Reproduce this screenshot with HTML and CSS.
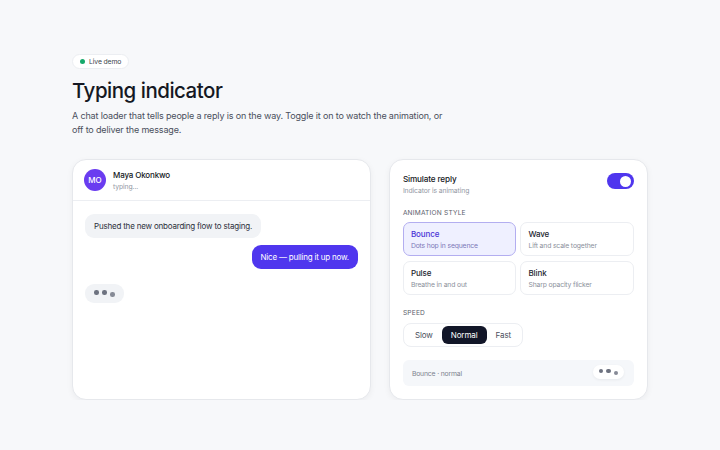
FILE: index.html
```html
<!DOCTYPE html>
<html lang="en">
<head>
  <meta charset="UTF-8" />
  <meta name="viewport" content="width=device-width, initial-scale=1.0" />
  <title>Typing indicator</title>
  <link rel="stylesheet" href="styles.css">
</head>
<body>
  <main class="page">
    <span class="badge"><span class="badge-dot"></span>Live demo</span>
    <h1>Typing indicator</h1>
    <p class="lead">A chat loader that tells people a reply is on the way. Toggle it on to watch the animation, or off to deliver the message.</p>

    <div class="panels">
      <section class="card chat">
        <header class="chat-head">
          <div class="avatar">MO</div>
          <div>
            <div class="name">Maya Okonkwo</div>
            <div class="sub">typing...</div>
          </div>
        </header>
        <div class="chat-body">
          <div class="bubble in">Pushed the new onboarding flow to staging.</div>
          <div class="bubble out">Nice — pulling it up now.</div>
          <div class="typing">
            <span class="dot"></span><span class="dot"></span><span class="dot low"></span>
          </div>
        </div>
      </section>

      <section class="card controls">
        <div class="row">
          <div>
            <div class="label">Simulate reply</div>
            <div class="sub">Indicator is animating</div>
          </div>
          <button class="toggle on" aria-label="Simulate reply"><span class="knob"></span></button>
        </div>

        <div class="section-title">Animation style</div>
        <div class="options">
          <div class="option selected">
            <div class="option-name">Bounce</div>
            <div class="option-desc">Dots hop in sequence</div>
          </div>
          <div class="option">
            <div class="option-name">Wave</div>
            <div class="option-desc">Lift and scale together</div>
          </div>
          <div class="option">
            <div class="option-name">Pulse</div>
            <div class="option-desc">Breathe in and out</div>
          </div>
          <div class="option">
            <div class="option-name">Blink</div>
            <div class="option-desc">Sharp opacity flicker</div>
          </div>
        </div>

        <div class="section-title">Speed</div>
        <div class="segmented">
          <button class="seg">Slow</button>
          <button class="seg active">Normal</button>
          <button class="seg">Fast</button>
        </div>

        <div class="preview">
          <span class="preview-label">Bounce · normal</span>
          <div class="typing mini">
            <span class="dot"></span><span class="dot"></span><span class="dot low"></span>
          </div>
        </div>
      </section>
    </div>
  </main>
</body>
</html>
```

FILE: styles.css
```css
body {
  margin: 0;
  background: #f7f8fa;
  font-family: 'Inter', 'Noto Sans', sans-serif;
  color: #151823;
}
.page {
  width: 576px;
  margin: 0 auto;
  padding-top: 54px;
}
.badge {
  display: flex;
  width: fit-content;
  align-items: center;
  gap: 4px;
  height: 15px;
  padding: 0 7px;
  background: #fff;
  border: 1px solid #eceef2;
  border-radius: 10px;
  font-size: 6.8px;
  letter-spacing: -0.1px;
  color: #3a3f4b;
  box-sizing: border-box;
}
.badge-dot {
  width: 5px;
  height: 5px;
  border-radius: 50%;
  background: #16a96b;
}
h1 {
  margin: 8px 0 0;
  font-size: 20.5px;
  font-weight: 500;
  letter-spacing: -0.5px;
  line-height: 28px;
}
.lead {
  margin: 4px 0 0;
  width: 380px;
  font-size: 9px;
  letter-spacing: -0.15px;
  line-height: 14px;
  color: #4a4f5c;
}
.panels {
  display: flex;
  gap: 18px;
  margin-top: 22px;
}
.card {
  background: #fff;
  border: 1px solid #e6e8ec;
  border-radius: 14px;
  box-shadow: 0 2px 6px rgba(20, 24, 40, 0.05);
  height: 239px;
}
.chat {
  width: 298px;
  display: flex;
  flex-direction: column;
}
.chat-head {
  display: flex;
  align-items: center;
  gap: 7px;
  padding: 9px 11px;
  border-bottom: 1px solid #eceef2;
}
.avatar {
  width: 22px;
  height: 22px;
  border-radius: 50%;
  background: #6a3cf0;
  color: #fff;
  font-size: 8px;
  font-weight: 500;
  display: flex;
  align-items: center;
  justify-content: center;
}
.name {
  font-size: 8px;
  font-weight: 500;
  letter-spacing: -0.15px;
}
.sub {
  font-size: 6.8px;
  letter-spacing: -0.1px;
  color: #9398a4;
  margin-top: 2px;
}
.chat-body {
  display: flex;
  flex-direction: column;
  gap: 7px;
  padding: 13px 12px;
}
.bubble {
  font-size: 8px;
  letter-spacing: -0.2px;
  padding: 7px 9px;
  border-radius: 9px;
  line-height: 10px;
}
.bubble.in {
  align-self: flex-start;
  background: #f1f3f6;
  color: #2c303b;
}
.bubble.out {
  align-self: flex-end;
  background: #4f36ee;
  color: #fff;
}
.typing {
  align-self: flex-start;
  display: flex;
  align-items: center;
  gap: 3.5px;
  margin-top: 8px;
  padding: 7px 9px;
  background: #f1f3f6;
  border-radius: 9px;
}
.dot {
  width: 4.5px;
  height: 4.5px;
  border-radius: 50%;
  background: #6d7280;
  transform: translateY(-1px);
}
.dot.low {
  transform: translateY(1px);
  background: #868a96;
}
.controls {
  width: 232px;
  padding: 14px 13px 0;
  height: 225px;
}
.row {
  display: flex;
  justify-content: space-between;
  align-items: flex-start;
}
.label {
  font-size: 8.2px;
  font-weight: 500;
  letter-spacing: -0.15px;
}
.toggle {
  width: 27px;
  height: 16px;
  margin-top: -1px;
  border: 0;
  border-radius: 8px;
  background: #4f36ee;
  padding: 0;
  display: flex;
  align-items: center;
  justify-content: flex-end;
}
.knob {
  width: 11px;
  height: 11px;
  margin-right: 3px;
  border-radius: 50%;
  background: #fff;
}
.section-title {
  margin: 14px 0 5px;
  font-size: 6.6px;
  color: #5b606c;
  text-transform: uppercase;
  letter-spacing: 0.2px;
}
.options {
  display: grid;
  grid-template-columns: 1fr 1fr;
  gap: 5px 4px;
}
.option {
  border: 1px solid #eceef2;
  border-radius: 7px;
  padding: 6px 7px;
  height: 20px;
}
.option.selected {
  background: #eff0ff;
  border-color: #b3aef0;
}
.option-name {
  font-size: 8px;
  font-weight: 500;
  letter-spacing: -0.1px;
  color: #23262f;
}
.option.selected .option-name {
  color: #4a34d6;
}
.option-desc {
  font-size: 6.8px;
  letter-spacing: -0.15px;
  color: #8b909b;
  margin-top: 2px;
}
.option.selected .option-desc {
  color: #7d78b8;
}
.segmented {
  display: inline-flex;
  padding: 2px;
  border: 1px solid #eceef2;
  border-radius: 8px;
}
.seg {
  border: 0;
  background: none;
  font-family: inherit;
  font-size: 8px;
  letter-spacing: -0.1px;
  color: #4a4f5c;
  padding: 0 9px;
  height: 18px;
  border-radius: 6px;
}
.seg.active {
  background: #121628;
  color: #fff;
}
.preview {
  display: flex;
  justify-content: space-between;
  align-items: center;
  margin-top: 13px;
  height: 26px;
  padding: 0 10px 0 9px;
  background: #f5f7fa;
  border-radius: 6px;
}
.preview-label {
  font-size: 6.8px;
  letter-spacing: -0.15px;
  color: #7d828e;
}
.typing.mini {
  align-self: center;
  margin: -2px 0 0;
  gap: 3px;
  padding: 5px 6px;
  background: #fff;
  border-radius: 8px;
  box-shadow: 0 1px 3px rgba(20, 24, 40, 0.06);
}
```
